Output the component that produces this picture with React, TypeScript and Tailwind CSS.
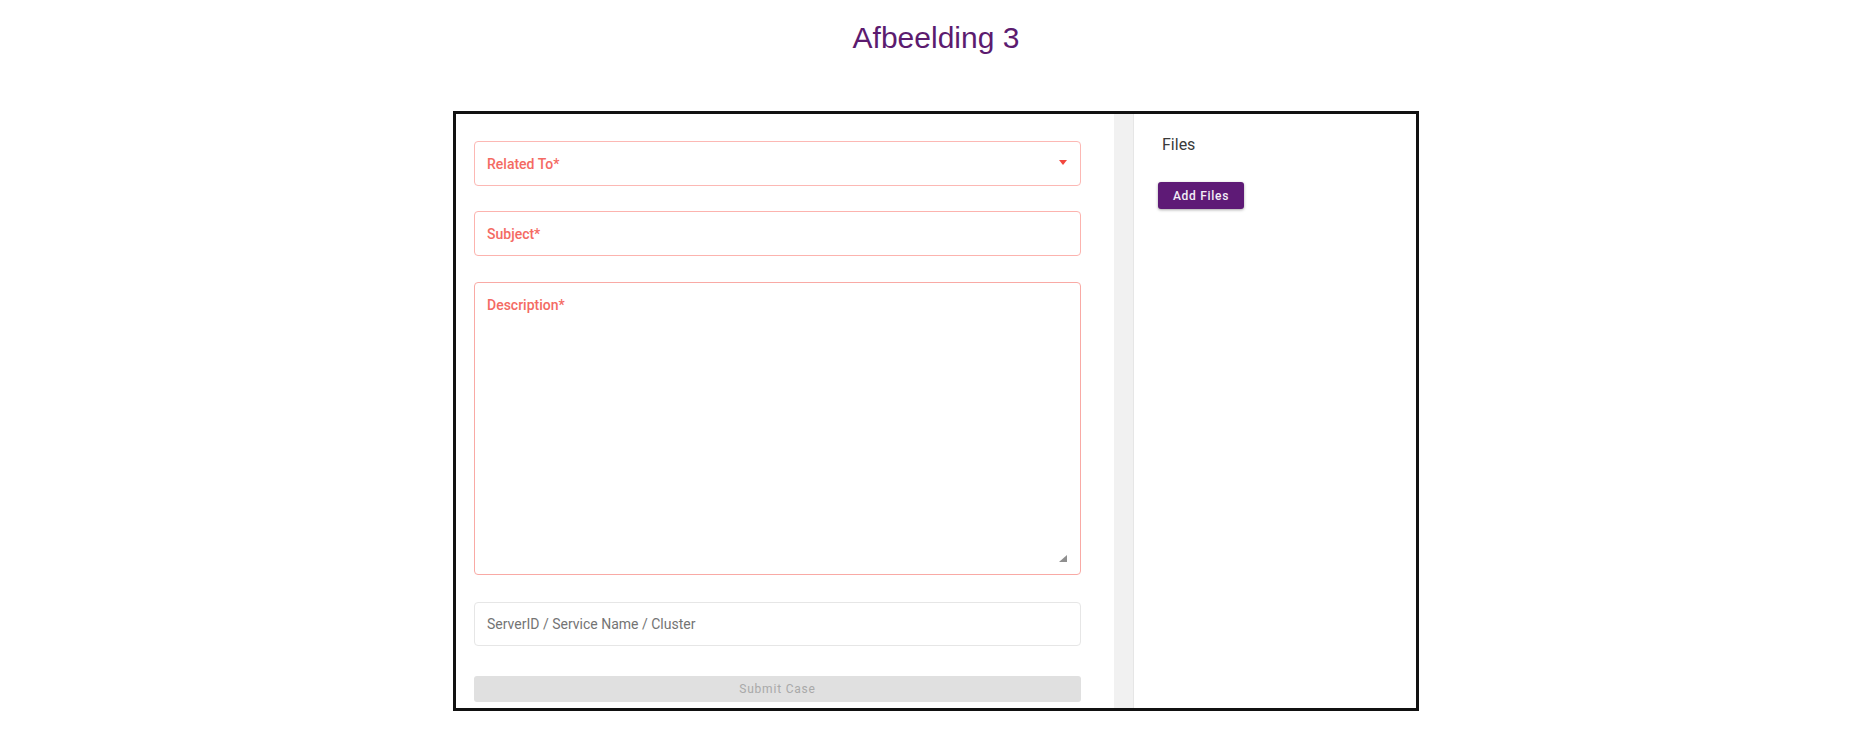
import React from "react";

function RedField({ label, className, children }: { label: string; className: string; children?: React.ReactNode }) {
  return (
    <div className={`relative rounded-[4px] border-[1.5px] bg-white ${className}`}>
      <span className="absolute left-[12px] top-[14px] text-[14px] leading-[17px] font-medium text-[#f46a63]">{label}</span>
      {children}
    </div>
  );
}

export default function App() {
  return (
    <div className="min-h-[744px] w-full bg-white font-['Roboto',sans-serif]">
      <h1 className="pt-[21px] text-center font-['Liberation_Sans',Arial,sans-serif] text-[30px] leading-[34px] font-normal text-[#5c1b6f]">
        Afbeelding 3
      </h1>

      <div className="mx-auto mt-[56px] flex h-[600px] w-[966px] overflow-hidden border-[3px] border-[#111] bg-white">
        {/* form column */}
        <div className="flex w-[658px] shrink-0 flex-col pl-[18px] pr-[33px] pt-[27px]">
          <RedField label="Related To*" className="h-[45px] border-[#fcb8b4]">
            <span className="absolute right-[13px] top-[18px] h-0 w-0 border-x-[4px] border-t-[5px] border-x-transparent border-t-[#f2473f]" />
          </RedField>
          <RedField label="Subject*" className="mt-[25px] h-[45px] border-[#fcb3ae]" />
          <RedField label="Description*" className="mt-[26px] h-[293px] border-[#f9aaa5]">
            <svg className="absolute bottom-[12px] right-[13px]" width="9" height="7" viewBox="0 0 9 7">
              <path d="M9 0 L9 7 L1 7 Z" fill="#8f8f8f" />
            </svg>
          </RedField>
          <div className="mt-[27px] flex h-[44px] items-center rounded-[4px] border-[1.5px] border-[#e6e6e6] px-[12px]">
            <span className="text-[14px] text-[#747474]">ServerID / Service Name / Cluster</span>
          </div>
          <button className="mt-[30px] h-[26px] shrink-0 rounded-[3px] bg-[#e0e0e0] text-[12px] tracking-[0.8px] text-[#a9a9a9]">
            Submit Case
          </button>
        </div>

        {/* divider strip */}
        <div className="w-[20px] shrink-0 border-r border-[#e6e6e6] bg-[#f1f1f1]" />

        {/* files panel */}
        <div className="flex-1 pl-[24px] pt-[21px]">
          <div className="pl-[4px] text-[16px] leading-[19px] text-[#3a3a3a]">Files</div>
          <button className="mt-[28px] h-[27px] w-[86px] rounded-[3px] bg-[#5e1a76] text-[12px] font-medium tracking-[0.7px] text-[#f3eef6] shadow-[0_1px_3px_rgba(0,0,0,0.35)]">
            Add Files
          </button>
        </div>
      </div>
    </div>
  );
}
